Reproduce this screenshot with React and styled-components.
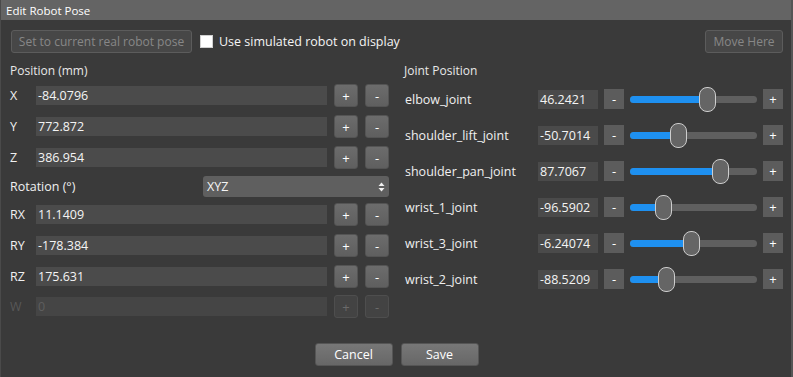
import React from "react";
import styled, { createGlobalStyle } from "styled-components";

const Global = createGlobalStyle`
  html, body { margin: 0; padding: 0; background: #3a3a3a; }
  body { font-family: "Open Sans", "Noto Sans", sans-serif; }
  * { box-sizing: border-box; }
`;

const Window = styled.div`
  width: 793px;
  height: 377px;
  display: flex;
  flex-direction: column;
  background: #3a3a3a;
  border-left: 1px solid #4a4a4a;
  border-right: 2px solid #555;
  color: #f0f0f0;
  font-size: 12px;
  overflow: hidden;
`;

const TitleBar = styled.div`
  height: 20px;
  flex: none;
  background: #646464;
  display: flex;
  align-items: center;
  padding-left: 5px;
  font-size: 11.5px;
  color: #ffffff;
`;

const Body = styled.div`
  flex: 1;
  display: flex;
  flex-direction: column;
  padding: 10px 8px 11px 9px;
`;

const TopRow = styled.div`
  height: 23px;
  display: flex;
  align-items: center;
`;

const FlatButton = styled.button`
  height: 23px;
  padding: 0 4px;
  font: inherit;
  font-size: 12px;
  color: ${(p) => (p.disabled ? "#878787" : "#ffffff")};
  background: #474747;
  border: 1px solid #5c5c5c;
  border-radius: 3px;
  width: ${(p) => p.w}px;
  white-space: nowrap;
`;

const CheckLabel = styled.label`
  display: flex;
  align-items: center;
  gap: 6px;
  margin-left: 8px;
  font-size: 12.5px;
  color: #f4f4f4;
`;

const Box = styled.span`
  width: 13px;
  height: 13px;
  background: #ffffff;
  border: 1px solid #d0d0d0;
  display: inline-block;
`;

const Spacer = styled.div`
  flex: 1;
`;

const Columns = styled.div`
  display: flex;
  gap: 15px;
  margin-top: 6px;
`;

const Column = styled.div`
  width: 379px;
  display: flex;
  flex-direction: column;
`;

const SectionLabel = styled.div`
  height: 22px;
  display: flex;
  align-items: center;
  font-size: 12px;
  color: #e8e8e8;
`;

const FieldRow = styled.div`
  height: 23px;
  display: flex;
  align-items: center;
  margin-top: ${(p) => p.mt}px;
`;

const FieldLabel = styled.div`
  width: 26px;
  font-size: 12.5px;
  color: ${(p) => (p.disabled ? "#585858" : "#f0f0f0")};
`;

const Input = styled.div`
  flex: 1;
  height: 19px;
  background: ${(p) => (p.disabled ? "#454545" : "#4b4b4b")};
  color: ${(p) => (p.disabled ? "#5e5e5e" : "#f4f4f4")};
  display: flex;
  align-items: center;
  padding-left: 2px;
  font-size: 12.5px;
`;

const StepButton = styled.div`
  width: 24px;
  height: 23px;
  margin-left: 7px;
  border-radius: 3px;
  display: flex;
  align-items: center;
  justify-content: center;
  font-size: 13px;
  color: ${(p) => (p.disabled ? "#6a6a6a" : "#ffffff")};
  background: ${(p) =>
    p.disabled ? "#434343" : "linear-gradient(#6c6c6c, #5f5f5f)"};
  border: 1px solid ${(p) => (p.disabled ? "#4e4e4e" : "#545454")};
`;

const RotationRow = styled.div`
  height: 21px;
  display: flex;
  align-items: center;
  justify-content: space-between;
  margin-top: 7px;
  font-size: 12.5px;
`;

const Select = styled.div`
  width: 186px;
  height: 21px;
  background: #5f5f5f;
  border-radius: 3px;
  display: flex;
  align-items: center;
  justify-content: space-between;
  padding: 0 4px 0 4px;
  font-size: 12.5px;
  color: #f4f4f4;
`;

const JointRow = styled.div`
  height: 36px;
  display: flex;
  align-items: center;
`;

const JointName = styled.div`
  width: 134px;
  padding-left: 1px;
  font-size: 12.5px;
  color: #f0f0f0;
`;

const ValueBox = styled.div`
  width: 60px;
  height: 19px;
  background: #4a4a4a;
  display: flex;
  align-items: center;
  padding-left: 2px;
  font-size: 12.5px;
  color: #f4f4f4;
`;

const SquareButton = styled.div`
  width: 20px;
  height: 20px;
  margin-left: 6px;
  background: #5c5c5c;
  display: flex;
  align-items: center;
  justify-content: center;
  font-size: 13px;
  color: #ffffff;
`;

const Track = styled.div`
  position: relative;
  width: 127px;
  height: 7px;
  margin-left: 6px;
  background: #5f5f5f;
  border-radius: 4px;
`;

const Fill = styled.div`
  height: 100%;
  background: #1e90f0;
  border-radius: 4px;
`;

const Handle = styled.div`
  position: absolute;
  top: -9px;
  width: 17px;
  height: 25px;
  background: #656565;
  border: 1px solid #cdcdcd;
  border-radius: 8px;
`;

const Footer = styled.div`
  margin-top: auto;
  display: flex;
  justify-content: center;
  gap: 8px;
`;

const DialogButton = styled.button`
  width: 78px;
  height: 23px;
  font: inherit;
  font-size: 12.5px;
  color: #ffffff;
  background: linear-gradient(#777777, #676767);
  border: 1px solid #555555;
  border-radius: 3px;
`;

const positions = [
  { label: "X", value: "-84.0796" },
  { label: "Y", value: "772.872" },
  { label: "Z", value: "386.954" },
];
const rotations = [
  { label: "RX", value: "11.1409" },
  { label: "RY", value: "-178.384" },
  { label: "RZ", value: "175.631" },
];
const joints = [
  { name: "elbow_joint", value: 46.2421, text: "46.2421" },
  { name: "shoulder_lift_joint", value: -50.7014, text: "-50.7014" },
  { name: "shoulder_pan_joint", value: 87.7067, text: "87.7067" },
  { name: "wrist_1_joint", value: -96.5902, text: "-96.5902" },
  { name: "wrist_3_joint", value: -6.24074, text: "-6.24074" },
  { name: "wrist_2_joint", value: -88.5209, text: "-88.5209" },
];

function Field({ label, value, mt, disabled }) {
  return (
    <FieldRow mt={mt}>
      <FieldLabel disabled={disabled}>{label}</FieldLabel>
      <Input disabled={disabled}>{value}</Input>
      <StepButton disabled={disabled}>+</StepButton>
      <StepButton disabled={disabled}>-</StepButton>
    </FieldRow>
  );
}

function Slider({ value }) {
  const frac = (value + 180) / 360;
  const center = 8.5 + frac * 110;
  return (
    <Track>
      <Fill style={{ width: `${center}px` }} />
      <Handle style={{ left: `${center - 8.5}px` }} />
    </Track>
  );
}

export default function App() {
  return (
    <>
      <Global />
      <Window>
        <TitleBar>Edit Robot Pose</TitleBar>
        <Body>
          <TopRow>
            <FlatButton disabled w={181} style={{ marginLeft: 1 }}>
              Set to current real robot pose
            </FlatButton>
            <CheckLabel>
              <Box />
              Use simulated robot on display
            </CheckLabel>
            <Spacer />
            <FlatButton disabled w={78}>
              Move Here
            </FlatButton>
          </TopRow>
          <Columns>
            <Column>
              <SectionLabel>Position (mm)</SectionLabel>
              {positions.map((p, i) => (
                <Field key={p.label} label={p.label} value={p.value} mt={i === 0 ? 3 : 8} />
              ))}
              <RotationRow>
                <span>Rotation (°)</span>
                <Select>
                  <span>XYZ</span>
                  <svg width="7" height="10" viewBox="0 0 7 10">
                    <path d="M3.5 0.5 L6.5 4 H0.5 Z" fill="#f0f0f0" />
                    <path d="M3.5 9.5 L6.5 6 H0.5 Z" fill="#f0f0f0" />
                  </svg>
                </Select>
              </RotationRow>
              {rotations.map((r, i) => (
                <Field key={r.label} label={r.label} value={r.value} mt={i === 0 ? 6 : 8} />
              ))}
              <Field label="W" value="0" mt={7} disabled />
            </Column>
            <Column>
              <SectionLabel>Joint Position</SectionLabel>
              {joints.map((j) => (
                <JointRow key={j.name}>
                  <JointName>{j.name}</JointName>
                  <ValueBox>{j.text}</ValueBox>
                  <SquareButton>-</SquareButton>
                  <Slider value={j.value} />
                  <SquareButton>+</SquareButton>
                </JointRow>
              ))}
            </Column>
          </Columns>
          <Footer>
            <DialogButton>Cancel</DialogButton>
            <DialogButton>Save</DialogButton>
          </Footer>
        </Body>
      </Window>
    </>
  );
}
